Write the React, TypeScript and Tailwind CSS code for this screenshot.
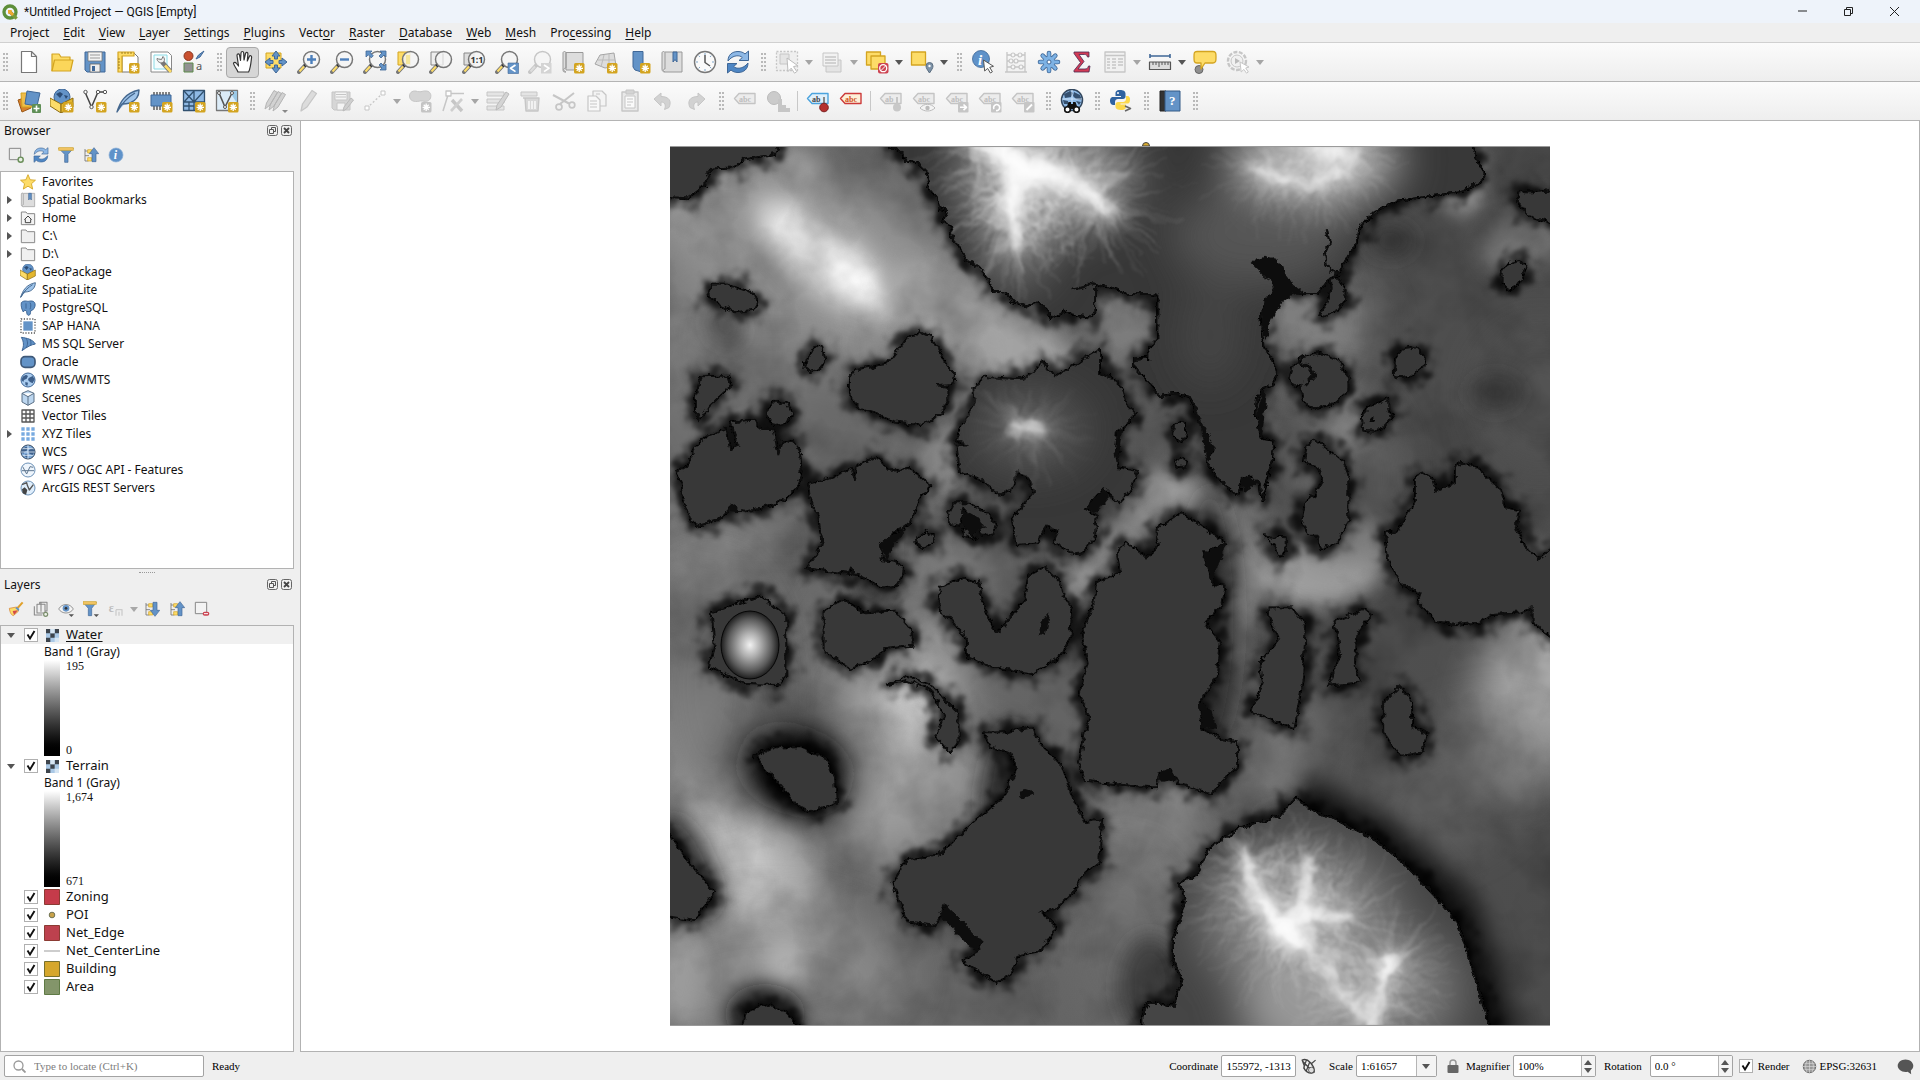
import React, { type ReactNode } from "react";

const BLUE = "#6393c7";
const NAVY = "#3f6797";
const YEL = "#fddc68";
const GOLD = "#d3a420";

/* ---------- icon helpers ---------- */

function Svg({ s = 24, vb = 24, children }: { s?: number; vb?: number; children: ReactNode }) {
  return (
    <svg width={s} height={s} viewBox={`0 0 ${vb} ${vb}`} fill="none" strokeLinejoin="round" aria-hidden="true">
      {children}
    </svg>
  );
}

function Star({ c = GOLD }: { c?: string }) {
  return (
    <g>
      <rect x="13" y="13" width="10.5" height="10.5" rx="1.5" fill={c} />
      <path d="M18.2 14.6v7.4M14.6 18.3h7.4M15.7 15.8l5 5M20.7 15.8l-5 5" stroke="#fff" strokeWidth="1.3" />
    </g>
  );
}

function Lens({ c = "#777", handle = YEL, children }: { c?: string; handle?: string; children?: ReactNode }) {
  return (
    <g>
      <path d="M2 22l6-6.500" stroke={c} strokeWidth="4" strokeLinecap="round" />
      <path d="M2.500 21.500l4.500-5" stroke={handle} strokeWidth="2" />
      <path d="M7.500 16l2-2" stroke={handle === YEL ? "#222" : c} strokeWidth="3" />
      <circle cx="14.500" cy="9.500" r="8" fill="#f4f4f4" fillOpacity="0.85" stroke={c} strokeWidth="1.500" />
      {children}
    </g>
  );
}

function Tag({ c = "#c4c4c4", f = "#ececec", t = "#bdbdbd", text = "abc" }: { c?: string; f?: string; t?: string; text?: string }) {
  return (
    <g>
      <path d="M1.500 9.500L6 4.500h16v10H6z" fill={f} stroke={c} strokeWidth="1.400" />
      <text x="6" y="12.500" fontSize="8" fontWeight="700" fontFamily="Liberation Serif, serif" fill={t}>{text}</text>
    </g>
  );
}

function Globe({ dark = false }: { dark?: boolean }) {
  return (
    <g>
      <circle cx="12" cy="12" r="10.500" fill={dark ? "#7ea9d8" : "#a9cbee"} stroke={dark ? "#33475e" : NAVY} strokeWidth="1.500" />
      <path d="M4 7l5-3 3 2-2 4-4 2-1 3-3-3zM13 9l6-3 3 5-3 6-4-2-3-3zM8 15l4 1-1 5-3-2z" fill="#3d5f8a" />
    </g>
  );
}

const G = "#c6c6c6";
const GF = "#e4e4e4";

const icons: Record<string, ReactNode> = {
  newFile: <path d="M4.500 1.500h10l5 5v16h-15zM14.500 1.500v5h5" fill="#fff" stroke="#777" strokeWidth="1.200" />,
  open: (
    <>
      <path d="M2 21V4h7l2 3h9v5" fill={YEL} stroke={GOLD} strokeWidth="1.200" />
      <path d="M2 21L4.500 10H23l-2.500 11z" fill="#fbd65a" stroke={GOLD} strokeWidth="1.200" />
    </>
  ),
  save: (
    <>
      <path d="M2 2h20v20H4l-2-2z" fill={BLUE} stroke={NAVY} />
      <rect x="5" y="2" width="14" height="9" fill="#f3f3f3" stroke="#777" strokeWidth=".8" />
      <path d="M7 5h10M7 8h10" stroke="#999" />
      <rect x="7" y="14" width="10" height="8" fill="#eee" stroke="#666" strokeWidth=".8" />
      <rect x="9" y="16" width="3" height="5" fill={NAVY} />
    </>
  ),
  layout: (
    <>
      <path d="M6 3h12l4 4v15H6z" fill="#fff" stroke="#777" />
      <path d="M2 2h16v4H6v16H2z" fill={YEL} stroke={GOLD} strokeWidth="1.200" />
      <path d="M6 2v2M9 2v2M12 2v2M15 2v2M2 9h2M2 12h2M2 15h2M2 18h2" stroke="#8a6a10" strokeWidth=".8" />
      <Star />
    </>
  ),
  wrench: (
    <>
      <path d="M2 2h17l3.500 3.500V22H2z" fill="#fff" stroke="#888" />
      <path d="M5 5h13v14H5z" fill="#f4fcfd" stroke="#8adbe6" />
      <path d="M21 21l-8-9" stroke="#777" strokeWidth="4.400" />
      <path d="M22 22l-6-6.500" stroke={YEL} strokeWidth="2.600" />
      <path d="M8 8.500c0 3 3 5 5.500 4s2.500-4 .5-6l-1.500 3-3-.5z" fill="#eee" stroke="#777" />
    </>
  ),
  styleMgr: (
    <>
      <circle cx="6.500" cy="6" r="4.500" fill="#c9502f" stroke="#8b3620" />
      <path d="M14 9l2.500-4L22 1l-4 6z" fill={BLUE} stroke={NAVY} />
      <rect x="2" y="13" width="9" height="9" fill="#919191" stroke="#5d8a4a" />
      <text x="14" y="20" fontSize="11" fontFamily="Noto Sans, sans-serif" fill="#555">a</text>
    </>
  ),
  hand: (
    <path
      d="M7 22c-1-3-4-6-4.500-8.500 0-1.500 2-1.500 3 0L7.500 16 6 5.500C6 3.500 8 3.500 8.500 5l1 5.500L10 3c.2-2 2.500-2 2.700 0l.3 7 1.500-6.500c.5-1.700 2.500-1.300 2.400.5L16.300 11l2-4.500c.7-1.500 2.500-.9 2.300.8-.6 5-1 11-3 14.700z"
      fill="#fff" stroke="#333" strokeWidth="1.200"
    />
  ),
  panSel: (
    <>
      <rect x="2" y="3" width="15" height="15" fill={YEL} stroke={GOLD} />
      <path d="M12 1l4 5h-2.500v3h-3V6H8zM12 23l4-5h-2.500v-3h-3v3H8zM1 12l5-4v2.500h3v3H6V16zM23 12l-5-4v2.500h-3v3h3V16z" fill={BLUE} stroke={NAVY} />
    </>
  ),
  zin: <Lens><path d="M14.500 5v9M10 9.500h9" stroke="#4c7fbb" strokeWidth="2.400" /></Lens>,
  zout: <Lens><path d="M10 9.500h9" stroke="#4c7fbb" strokeWidth="2.400" /></Lens>,
  zfull: (
    <>
      <Lens />
      <path d="M3 1h6L7.300 2.800l3 3-2 2-3-3L3 7zM23 1v6l-2-2-3 3-2-2 3-3-2-2zM23 20v-6l-2 2-3-3-2 2 3 3-2 2z" fill={BLUE} stroke={NAVY} strokeWidth=".8" />
    </>
  ),
  zsel: (<><rect x="2" y="2" width="12" height="13" fill={YEL} stroke={GOLD} /><Lens><path d="M10 5h4v9h-4z" fill="#f5e69a" /></Lens></>),
  zlayer: (<><rect x="2" y="2" width="12" height="13" fill="#eee" stroke="#888" /><Lens><path d="M14 4v11" stroke="#ddd" /></Lens></>),
  z11: (<><rect x="2" y="3" width="10" height="12" fill="#ddd" stroke="#888" /><Lens><text x="8.500" y="13" fontSize="9" fontWeight="700" fontFamily="Noto Sans, sans-serif" fill="#333">1:1</text></Lens></>),
  zlast: (<><Lens /><rect x="13" y="13" width="10.500" height="10.500" fill={BLUE} stroke={NAVY} strokeWidth=".6" /><path d="M20.500 15l-5 3.300 5 3.300" stroke="#fff" strokeWidth="1.700" /></>),
  znext: (<><Lens c={G} handle="#ddd" /><rect x="13" y="13" width="10.500" height="10.500" fill="#d4d4d4" /><path d="M16 15l5 3.300-5 3.300" stroke="#fff" strokeWidth="1.700" /></>),
  newMap: (<><path d="M2 3c0-2 3-2 3 0v15c-3 0-3 3 0 4h-1c-2 0-2-1-2-3zM5 2.500h17V20H5z" fill="#ddd" stroke="#999" /><Star /></>),
  new3d: (<><path d="M6 5l14-2 2 13-11 2-10-4z" fill="#ddd" stroke="#a5a5a5" /><path d="M4 10l17 0M10 5l-3 12M15 4l0 13" stroke="#bbb" /><Star /></>),
  bmNew: (<><path d="M6 1.500h10v17l-3 3-5-1.500-2-3z" fill={BLUE} stroke={NAVY} /><Star /></>),
  bm: (<><path d="M2 3c0-2 3-2 3 0v16c-2 0-2 2 0 3M5 2h17v20H5c-2 0-3-1-3-3V3" fill="#ddd" stroke="#999" /><path d="M13 2h4v10l-2-2.500-2 2.500z" fill={BLUE} stroke={NAVY} /></>),
  clock: (<><circle cx="12" cy="12" r="10.500" fill="#fafafa" stroke="#777" strokeWidth="1.400" /><path d="M12 3v2M12 19v2M3 12h2M19 12h2M5.600 5.600l1.300 1.300M17 17l1.300 1.300M18.300 5.600L17 7M7 17l-1.400 1.400" stroke="#7fa5c9" /><path d="M12 5v7.500l5 3.500" stroke="#555" strokeWidth="1.500" /></>),
  refresh: (
    <>
      <path d="M2 11C2 5 6 1.500 12 1.500c3 0 5.500 1 7 2.500L22.500 1v9.500H13l3.300-3C14 5 7 4.500 2 11z" fill="#8db8e6" stroke={NAVY} />
      <path d="M22 13c0 6-4 9.500-10 9.500-3 0-5.500-1-7-2.500L1.500 23v-9.500H11l-3.300 3C10 19 17 19.500 22 13z" fill="#4e86c4" stroke={NAVY} />
    </>
  ),
  selRect: (<><rect x="1.500" y="1.500" width="21" height="19" fill="#efefef" stroke={G} strokeDasharray="2 1.500" strokeWidth="1.300" /><path d="M5 4h9v10H5z" fill={GF} stroke={G} /><path d="M12 8l1 13.500 3.200-3.300 3.300 5 2.300-1.600-3.300-5 4.200-1z" fill="#fff" stroke="#bbb" /></>),
  selForm: (<><rect x="6" y="10" width="15" height="12" fill={GF} stroke={G} /><rect x="3" y="3" width="15" height="13" fill="#f2f2f2" stroke={G} /><path d="M5 7h11M5 10h11M5 13h11" stroke={G} strokeWidth="1.300" /></>),
  desel: (<><rect x="1.500" y="2" width="14" height="13" fill={YEL} stroke={GOLD} strokeWidth="1.300" /><rect x="6" y="6" width="14" height="13" fill={YEL} stroke={GOLD} strokeWidth="1.300" /><rect x="13" y="13" width="10.500" height="10.500" rx="2" fill="#cd4452" /><circle cx="18.200" cy="18.200" r="3.500" stroke="#fff" strokeWidth="1.300" /><path d="M15.500 21l5.500-5.500" stroke="#fff" /></>),
  selLoc: (<><rect x="1.500" y="2" width="14" height="13" fill={YEL} stroke={GOLD} strokeWidth="1.300" /><path d="M19.500 23c-2-3-3.500-5-3.500-7a3.500 3.500 0 017 0c0 2-1.500 4-3.500 7z" fill="#7d93a8" stroke="#5c6e80" /><circle cx="19.500" cy="16" r="1.200" fill="#fff" /></>),
  identify: (<><circle cx="10" cy="9" r="8.500" fill="#5f92c9" stroke={NAVY} strokeWidth=".8" /><text x="7" y="15" fontSize="15" fontStyle="italic" fontWeight="700" fontFamily="Liberation Serif, serif" fill="#fff">i</text><path d="M12.500 10l1.200 11 2.900-2.600 2.800 4.600 2-1.200-2.700-4.500 3.800-1z" fill="#fff" stroke="#555" /></>),
  abacus: (<><path d="M3 2v20M21 2v20M1 22h22M3 5h18M3 11h18M3 17h18" stroke={G} strokeWidth="1.300" /><g fill="#f6f6f6" stroke={G} strokeWidth="1.200"><circle cx="9" cy="5" r="2" /><circle cx="16" cy="5" r="2" /><circle cx="7" cy="11" r="2" /><circle cx="12" cy="11" r="2" /><circle cx="9" cy="17" r="2" /><circle cx="17" cy="17" r="2" /></g></>),
  gear: (<><g stroke={NAVY} strokeWidth="4.600" strokeLinecap="round"><path d="M12 3v18M3 12h18M5.700 5.700l12.600 12.600M18.300 5.700L5.700 18.300" /></g><g stroke="#7db2e4" strokeWidth="3" strokeLinecap="round"><path d="M12 3v18M3 12h18M5.700 5.700l12.600 12.600M18.300 5.700L5.700 18.300" /></g><circle cx="12" cy="12" r="5.500" fill="#7db2e4" /><circle cx="12" cy="12" r="2" fill="#fff" stroke={NAVY} /></>),
  sigma: <path d="M4 2h15v5h-1.500c-.5-2-1.500-2.500-3-2.500H9l5 7-6 7.500h7c2 0 3-1 3.500-3H20l-1 6H4v-1.500l6.500-8L4 3.500z" fill="#d23a55" stroke="#4a2b52" strokeWidth=".8" />,
  table: (<><rect x="2" y="2" width="20" height="20" fill="#f1f1f1" stroke={G} strokeWidth="1.300" /><path d="M2 5.500h20M4 9h3M9 9h4M15 9h5M4 12h3M9 12h4M15 12h5M4 15h3M9 15h4M15 15h5M4 18h3M9 18h4" stroke={G} strokeWidth="1.300" /></>),
  measure: (<><path d="M2 6h20M2 4v4M22 4v4" stroke="#3f6797" strokeWidth="1.600" /><rect x="1.500" y="12" width="21" height="7.500" fill="#ddd" stroke="#555" strokeWidth="1.200" /><path d="M5 12v3M8 12v3M11 12v5M14 12v3M17 12v3M20 12v3" stroke="#555" /></>),
  tip: (<><circle cx="6" cy="19.500" r="4" fill="#8f8f8f" stroke="#666" /><path d="M4 1.500h16c3 0 3 2 3 5.500s0 6-3 6h-8l-4 6 0-6H4c-3 0-3-2-3-6s0-5.500 3-5.500z" fill={YEL} stroke={GOLD} strokeWidth="1.300" /></>),
  action: (<><circle cx="11" cy="11" r="9" stroke={G} strokeWidth="2.400" strokeDasharray="4 1.500" /><circle cx="11" cy="11" r="6" fill="#f1f1f1" stroke={G} /><path d="M9 8l5 3-5 3z" fill="#bbb" /><path d="M14 12l1.200 10 2.700-2.600 2.600 3.800 1.800-1.200-2.600-4 3.300-1z" fill="#fff" stroke={G} /></>),
  dsm: (<><path d="M1 11l9-3 4 11-9 4z" fill="#d9822b" stroke="#9a5717" /><path d="M4 4h11v14H5z" fill="#f0bd4a" stroke={GOLD} /><path d="M10 2l13 2-3 13-12-2z" fill={BLUE} stroke={NAVY} /><rect x="15" y="15" width="9" height="9" rx="1" fill="#5f8f56" /><path d="M19.500 16.500v6M16.500 19.500h6" stroke="#fff" strokeWidth="1.600" /></>),
  gpkg: (<><circle cx="12" cy="8" r="8" fill={BLUE} stroke={NAVY} /><path d="M6 5l4-2 3 2-3 4zM14 6l4 1-2 3z" fill="#2c4c74" /><path d="M0 9l11 6v9L0 17z" fill={YEL} stroke="#8a6a10" /><path d="M23 9l-12 6v9l12-6z" fill="#e3b62e" stroke="#8a6a10" /></>),
  shp: (<><path d="M2 3l6.500 15L15 3h7" stroke="#444" strokeWidth="1.500" /><g fill="#fff" stroke="#555"><circle cx="2.500" cy="3" r="1.700" /><circle cx="8.500" cy="18" r="1.700" /><circle cx="15" cy="3" r="1.700" /><circle cx="22" cy="3" r="1.700" /></g><Star /></>),
  feather: (<path d="M1 23C4 13 9 4 23 1c0 7-4 11-9 13-4 1-6 1-8 1z M1 23C6 14 12 8 19 4" fill="#9fc4ea" stroke="#44678e" strokeWidth="1.400" />),
  chip: (<><path d="M5 3v18M8 3v18M11 3v18M14 3v18M17 3v18M20 3v18" stroke="#444" strokeWidth="1.300" /><rect x="2" y="6" width="20" height="11" fill={BLUE} stroke={NAVY} /><Star /></>),
  mesh: (<><rect x="1.500" y="1.500" width="21" height="20" fill="#8fb9e4" stroke="#32516f" strokeWidth="1.300" /><path d="M12 1.500v20M1.500 13h21M2 2l10 11M12 2l-10 11M12 13L22 2M2 17h10M7 13v8" stroke="#32516f" strokeWidth="1.300" /><Star /></>),
  vlayer: (<><rect x="1.500" y="1.500" width="21" height="20" fill="#dcecf8" stroke="#777" strokeWidth="1.300" /><path d="M14 2h8v12z" fill="#9cc9e6" /><path d="M4 4l6 14L17 4" stroke="#555" strokeWidth="1.600" /><circle cx="4" cy="4" r="1.500" fill="#fff" stroke="#555" /><circle cx="10" cy="18" r="1.500" fill="#fff" stroke="#555" /><circle cx="17" cy="4" r="1.500" fill="#fff" stroke="#555" /><Star /></>),
  pencils: (<><path d="M1 20l1.500-6L10 1.500l3.500 2L6 16zM5 21l1.500-6L14 2.500l3.500 2L10 17zM9 22l1.500-6L18 3.500l3.500 2L14 18z" fill="#d2d2d2" stroke="#b4b4b4" /><path d="M18 21h6l-3 3z" fill="#888" /></>),
  pencil: (<path d="M4 22l1.500-7L15 1.500l4.500 3L10 18z" fill="#dcdcdc" stroke={G} strokeWidth="1.300" />),
  saveEd: (<><path d="M2 3h18v18H4l-2-2z" fill="#d6d6d6" stroke={G} /><path d="M5 3h12v8H5zM7 14h8v7H7z" fill="#f4f4f4" stroke={G} /><path d="M6 5.500h10M6 8h10" stroke={G} /><path d="M13 22l1-4 7-9 2.500 2-7 9z" fill="#cfcfcf" stroke="#bbb" /></>),
  digit: (<><path d="M4 19L20 4" stroke={G} strokeWidth="1.300" strokeDasharray="2 2" /><rect x="2" y="17" width="4" height="4" fill="#fff" stroke={G} /><rect x="18" y="2" width="4" height="4" fill="#fff" stroke={G} /></>),
  blob: (<><path d="M1.500 7c0-4 4-6 8-4.500 4 1 5-1 9-.5s5 4 4 7-4 4-8 3c-3-.5-4 .8-7 .5-4-.3-6-2.500-6-5.500z" fill="#d4d4d4" stroke={G} /><Star c="#c4c4c4" /></>),
  vertex: (<><path d="M2 22L7 6M9 4.500h14" stroke={G} strokeWidth="1.500" /><rect x="5" y="2" width="5" height="5" fill="#fff" stroke={G} strokeWidth="1.300" /><path d="M11 11l10 11" stroke={G} strokeWidth="3.400" /><path d="M21 10L10 22" stroke="#cfcfcf" strokeWidth="2.600" /></>),
  multi: (<><path d="M1 3h17v4H1zM1 10h17v4H1zM1 17h17v4H1z" fill={GF} stroke={G} /><path d="M10 21l1-5L20 3l3 2-8 13z" fill="#d4d4d4" stroke="#bbb" /></>),
  trash: (<><path d="M2 3h16v4H2z" fill={GF} stroke={G} /><path d="M4 9h16M6 9h14l-1 13H7z" fill="#d8d8d8" stroke={G} strokeWidth="1.400" /><path d="M10 12v8M13 12v8M16 12v8" stroke="#fff" strokeWidth="1.300" /></>),
  cut: (<><path d="M1 6l16 8.500M22 4L8 15" stroke={G} strokeWidth="2" /><circle cx="20" cy="16" r="2.800" stroke={G} strokeWidth="1.700" /><ellipse cx="7" cy="18" rx="3" ry="2.800" stroke={G} strokeWidth="1.700" /></>),
  copy: (<><path d="M8 2h9l4 4v11H8z" fill="#f4f4f4" stroke={G} strokeWidth="1.200" /><path d="M3 7h8l4 4v11H3z" fill="#f8f8f8" stroke={G} strokeWidth="1.200" /><path d="M5 12h7M5 15h7M5 18h7M11 5h4" stroke={G} /></>),
  paste: (<><rect x="4" y="3" width="16" height="19" fill="#e9e9e9" stroke={G} strokeWidth="1.400" /><path d="M7 7h10v12H7z" fill="#fafafa" stroke={G} /><path d="M8 1h8v4H8z" fill="#d4d4d4" stroke={G} /><path d="M9 10h6M9 13h6M9 16h4" stroke={G} /></>),
  undo: <path d="M3 10l7-6v3.500c8 0 11 4.500 8 11l-4.500 2c2-5 0-7.500-3.500-7.500v4z" fill="#d2d2d2" stroke={G} />,
  redo: <path d="M21 10l-7-6v3.500c-8 0-11 4.500-8 11l4.500 2c-2-5 0-7.500 3.500-7.500v4z" fill="#d2d2d2" stroke={G} />,
  tag: <Tag />,
  diagram: (<><circle cx="8" cy="9" r="6.500" fill="#cbcbcb" stroke="#bbb" /><path d="M12 10h4v13h-4zM16 16h4v7h-4zM20 19h4v4h-4z" fill={G} /></>),
  tagPin: (<><Tag c="#4ba3dd" f="#dff0fb" t="#444" text="ab" /><path d="M18 8v7" stroke="#888" strokeWidth="2" /><circle cx="18" cy="18.500" r="4.300" fill="#b5302f" stroke="#7c1f1f" /></>),
  tagRed: <Tag c="#cc3a3a" f="#fdf0d8" t="#d0521f" />,
  tagPin2: (<><Tag text="ab" /><path d="M18 8v7" stroke={G} strokeWidth="2" /><circle cx="18" cy="18.500" r="4" fill="#c8c8c8" /></>),
  tagEye: (<><Tag /><path d="M8 19c4-5 11-5 15 0-4 4-11 4-15 0z" fill="#f4f4f4" stroke="#bbb" /><circle cx="15.500" cy="19" r="2.200" fill="#bbb" /></>),
  tagMove: (<><Tag /><rect x="13" y="13" width="10.500" height="10.500" rx="1" fill={G} /><path d="M15 18.300h6M18.500 15.500l3 2.800-3 2.800" stroke="#fff" strokeWidth="1.600" /></>),
  tagRot: (<><Tag /><rect x="13" y="13" width="10.500" height="10.500" rx="1" fill={G} /><path d="M16 20a3 3 0 112 1.500" stroke="#fff" strokeWidth="1.600" /></>),
  tagEdit: (<><Tag /><rect x="13" y="13" width="10.500" height="10.500" rx="1" fill={G} /><path d="M15.500 21l5.500-5.500" stroke="#fff" strokeWidth="1.800" /></>),
  search: (
    <>
      <circle cx="12" cy="11" r="10.500" fill="#8fbbe8" stroke="#33475e" strokeWidth="1.500" />
      <path d="M4 5l6-3 3 2-2 4-6 1zM14 3l6 3 2 5-6-1-3-3zM3 11l5 1v3H4zM16 12l5 1-2 3z" fill="#35506f" />
      <path d="M2 10h20M12 1v12" stroke="#dcebfa" strokeWidth=".8" />
      <path d="M6 20l2.500-7H11v2h2v-2h2.500L18 20z" fill="#111" />
      <circle cx="7.500" cy="20.500" r="2.800" fill="#fff" stroke="#111" strokeWidth="1.600" />
      <circle cx="16.500" cy="20.500" r="2.800" fill="#fff" stroke="#111" strokeWidth="1.600" />
    </>
  ),
  python: (<><path d="M11 1C7 1 6.500 3 6.500 4.500V7H12v1H4C1.500 8 1 10.500 1 12s.8 4 3 4h2v-3c0-2 1.500-3 3-3h5c1.500 0 2.500-1 2.500-2.500v-3C16.500 2 14 1 11 1z" fill="#2f62a0" /><path d="M12 21c4 0 5-1.500 5-3v-2.500h-5.500v-1H19c2 0 2-3.500 2-4.500s-.6-3-2.500-3H17v3c0 2-1.500 3-3 3H9c-1.500 0-2.500 1-2.500 2.500v2.500C6.500 20 9 21 12 21z" fill="#fbd84c" /><circle cx="9" cy="4" r="1" fill="#fff" /><path d="M16 17l5.500 2.500L16 22" stroke="#666" strokeWidth="1.600" /></>),
  help: (<><path d="M2 2h6v20H2z" fill="#333" stroke="#222" /><path d="M7 2h15v20H7z" fill={BLUE} stroke="#345a86" /><text x="11" y="16" fontSize="13" fontWeight="700" fontFamily="Liberation Serif, serif" fill="#fff">?</text></>),
  globe: <Globe />,
  globeDark: (<><Globe dark /><path d="M2 12h20M12 2v20M4 7h16M4 17h16" stroke="#e4effa" strokeWidth="1.200" /></>),
  fav: <path d="M12 1l3.200 7.600 8 .7-6 5.300 1.800 8L12 18.300 5 22.600l1.800-8-6-5.300 8-.7z" fill={YEL} stroke={GOLD} strokeWidth="1.300" />,
  home: (<><path d="M2 22V3h7l2 2.500h11V22z" fill="#f3f3f3" stroke="#888" strokeWidth="1.500" /><path d="M6.500 14.500L12 9l5.500 5.500M8 14v5h8v-5" stroke="#444" strokeWidth="1.500" /></>),
  folder: <path d="M2 22V3h7l2 2.500h11V22z" fill="#f0f0f0" stroke="#8a8a8a" strokeWidth="1.500" />,
  pg: (<path d="M2 4c4-4 8-2 10-2s7-2 10 2c2 5-1 9-3 11l-3 1c0 4-1 7-3 7s-3-2-3-6l-3-2-2 3C3 15 1 9 2 4zM9 5v8M15 4c2 3 1 7 0 10" fill={BLUE} stroke={NAVY} strokeWidth="1.500" />),
  hana: (<><rect x="1.500" y="1.500" width="21" height="21" stroke="#555" strokeWidth="2" strokeDasharray="1.800 2.400" /><rect x="5" y="5" width="14" height="14" fill={BLUE} /></>),
  mssql: <path d="M2 2c8 1 17 3 21 10-6 1-12 4-20 10 3-7 3-13-1-20zM9 3c3 5 3 10 0 15M15 5c2 4 2 7 0 10" fill={BLUE} stroke={NAVY} strokeWidth="1.500" />,
  oracle: <rect x="1.500" y="4" width="21" height="16" rx="6" fill={BLUE} stroke="#3e5878" strokeWidth="2.500" />,
  scenes: <path d="M12 1l9 4v13l-9 5-9-5V5zM3 5l9 5 9-5M12 10v13" fill="#bcd6ef" stroke="#5b7086" strokeWidth="1.500" />,
  grid: <path d="M3 3h18v18H3zM9 3v18M15 3v18M3 9h18M3 15h18" fill="#fafafa" stroke="#555" strokeWidth="2" />,
  xyz: (<g fill="#78aae0"><path d="M2 2h5v5H2zM9.500 2h5v5h-5zM17 2h5v5h-5zM2 9.500h5v5H2zM9.500 9.500h5v5h-5zM17 9.500h5v5h-5zM2 17h5v5H2zM9.500 17h5v5h-5zM17 17h5v5h-5z" /></g>),
  wfs: (<><circle cx="12" cy="12" r="10.500" fill="#eef5fc" stroke="#6d92b8" strokeWidth="1.500" /><path d="M4 7l6 11 5-11 5 1M3 13h18" stroke="#5f7790" strokeWidth="1.500" /></>),
  arcgis: (<><circle cx="12" cy="12" r="10.500" fill="#dfeefc" stroke="#6d92b8" strokeWidth="1.500" /><path d="M3 7l7-3 1 4 3 7 6-8" stroke="#555" strokeWidth="2" /><path d="M3 14l4-3 4 4-2 7-5-2z" fill="#444" /></>),
  raster: (<><rect width="24" height="24" fill="#a9c8e6" /><path d="M0 0h8v8H0zM16 0h8v8h-8zM8 8h8v8H8zM0 16h8v8H0z" fill="#3d444c" /><path d="M8 0h8v8H8zM16 16h8v8h-8z" fill="#d7e6f3" /></>),
  addLayer: (<><path d="M2 2h17v17H2z" fill="#eee" stroke="#888" strokeWidth="1.500" /><circle cx="19" cy="19" r="3.800" fill="#e8f0e4" stroke="#6b8f5a" strokeWidth="2.200" /></>),
  funnel: (<><path d="M1 2h22l-8 9v12H10V11z" fill={BLUE} stroke={NAVY} /><path d="M1 1h22v4H1z" fill="#f4c76a" stroke={GOLD} /></>),
  funnelMenu: (<><path d="M0 2h20l-7 9v11H8V11z" fill={BLUE} stroke={NAVY} /><path d="M0 1h20v4H0z" fill="#f4c76a" stroke={GOLD} /><path d="M16 20h8l-4 4z" fill="#555" /></>),
  collapse: (<><path d="M3 3v18h5M3 6h6M3 13h6" stroke="#777" strokeWidth="1.300" /><path d="M7 4h6v5H7zM7 16h6v5H7z" fill={YEL} stroke={GOLD} /><path d="M16.500 1l7 9h-4v12h-6V10h-4z" fill={BLUE} stroke={NAVY} /></>),
  expand: (<><path d="M3 3v18h5M3 6h6M3 13h6" stroke="#777" strokeWidth="1.300" /><path d="M7 4h6v5H7zM7 16h6v5H7z" fill={YEL} stroke={GOLD} /><path d="M16.500 23l7-9h-4V2h-6v12h-4z" fill={BLUE} stroke={NAVY} /></>),
  info: (<><circle cx="12" cy="12" r="10.500" fill="#5f92c9" stroke="#8aaed6" /><text x="8.500" y="18.500" fontSize="18" fontStyle="italic" fontWeight="700" fontFamily="Liberation Serif, serif" fill="#fff">i</text></>),
  brush: (<><path d="M13 12l9-10" stroke="#e0a02a" strokeWidth="3" /><path d="M2 11l11-2 3 6-8 7c-3-1-5-4-6-11z" fill={YEL} stroke="#d37a2a" /><path d="M7 15l8-1-6 7z" fill="#d34a4a" /><path d="M13 9l4 3-1 3-5-4z" fill={BLUE} /></>),
  group: (<><path d="M2 8v13h12M6 5v13h12V5zM10 5V2h11v13h-3M12 1v15" stroke="#888" strokeWidth="1.600" /><circle cx="19" cy="20" r="3" fill="#eef3ea" stroke="#7c8f6e" strokeWidth="1.800" /></>),
  eye: (<><path d="M1 12c5-9 17-9 22 0-5 8-17 8-22 0z" fill="#f4f4f4" stroke="#888" strokeWidth="1.300" /><circle cx="12" cy="11" r="5" fill={BLUE} /><circle cx="12" cy="11" r="2" fill="#333" /><path d="M16 20h8l-4 4z" fill="#555" /></>),
  eps: (<><text x="1" y="16" fontSize="18" fontWeight="700" fontFamily="Liberation Serif, serif" fill="#bdbdbd">ε</text><path d="M12 13h9v9M12 13v9M16.500 16v6" stroke="#ccc" strokeWidth="2" /></>),
  remove: (<><path d="M2 2h17v17H2z" fill="#f3f3f3" stroke="#888" strokeWidth="1.500" /><rect x="13" y="16" width="10" height="6" rx="3" fill="#cd4452" /><path d="M15 19h6" stroke="#fff" strokeWidth="1.500" /></>),
};

/* ---------- toolbars ---------- */

type Tool = [icon: string, label: string, opts?: string] | "grip" | "sep";

const row1: Tool[] = [
  ["newFile", "New Project"], ["open", "Open Project"], ["save", "Save Project"], ["layout", "New Print Layout"], ["wrench", "Layout Manager"], ["styleMgr", "Style Manager"],
  "grip",
  ["hand", "Pan Map", "on"], ["panSel", "Pan to Selection"], ["zin", "Zoom In"], ["zout", "Zoom Out"], ["zfull", "Zoom Full"], ["zsel", "Zoom to Selection"], ["zlayer", "Zoom to Layer"], ["z11", "Zoom to Native Resolution"], ["zlast", "Zoom Last"], ["znext", "Zoom Next"], ["newMap", "New Map View"], ["new3d", "New 3D Map View"], ["bmNew", "New Spatial Bookmark"], ["bm", "Show Spatial Bookmarks"], ["clock", "Temporal Controller"], ["refresh", "Refresh"],
  "grip",
  ["selRect", "Select Features", "menu off"], ["selForm", "Select by Value", "menu off"], ["desel", "Deselect Features", "menu"], ["selLoc", "Select by Location", "menu"],
  "grip",
  ["identify", "Identify Features"], ["abacus", "Field Calculator"], ["gear", "Processing Toolbox"], ["sigma", "Statistical Summary"], ["table", "Attribute Table", "menu off"], ["measure", "Measure Line", "menu"], ["tip", "Map Tips"], ["action", "Run Feature Action", "menu off"],
];

const row2: Tool[] = [
  ["dsm", "Data Source Manager"], ["gpkg", "New GeoPackage Layer", "star"], ["shp", "New Shapefile Layer"], ["feather", "New SpatiaLite Layer", "star"], ["chip", "New Temporary Layer"], ["mesh", "New Mesh Layer"], ["vlayer", "New Virtual Layer"],
  "grip",
  ["pencils", "Current Edits"], ["pencil", "Toggle Editing"], ["saveEd", "Save Layer Edits"], ["digit", "Digitize", "menu off"], ["blob", "Add Record"], ["vertex", "Vertex Tool", "menu off"], ["multi", "Modify Attributes"], ["trash", "Delete Selected"], ["cut", "Cut Features"], ["copy", "Copy Features"], ["paste", "Paste Features"], ["undo", "Undo"], ["redo", "Redo"],
  "grip",
  ["tag", "Label Options"], ["diagram", "Diagram Options"], "sep", ["tagPin", "Highlight Pinned Labels"], ["tagRed", "Toggle Unplaced Labels"], "sep",
  ["tagPin2", "Pin Labels"], ["tagEye", "Show Labels"], ["tagMove", "Move Label"], ["tagRot", "Rotate Label"], ["tagEdit", "Change Label"],
  "grip", ["search", "MetaSearch"], "grip", ["python", "Python Console"], "grip", ["help", "Help Contents"], "grip",
];

function Grip() {
  return (
    <div className="flex w-4 shrink-0 justify-center gap-px pl-0.5">
      <span className="h-[18px] border-l-2 border-dotted border-[#b9b9b9]" />
      <span className="h-[18px] border-l-2 border-dotted border-[#b9b9b9]" />
    </div>
  );
}

function Down({ c = "#555" }: { c?: string }) {
  return (
    <svg width="8" height="5" viewBox="0 0 8 5" aria-hidden="true"><path d="M0 0h8L4 5z" fill={c} /></svg>
  );
}

function Toolbar({ items, label }: { items: Tool[]; label: string }) {
  return (
    <div role="toolbar" aria-label={label} className="flex h-[39px] items-center border-b border-[#b4b4b4] bg-linear-to-b from-[#fbfbfb] to-[#eeeeee]">
      <div className="-ml-1 flex"><Grip /></div>
      {items.map((t, i) => {
        if (t === "grip") return <Grip key={i} />;
        if (t === "sep") return <span key={i} className="mx-[3px] h-5 w-px bg-[#c8c8c8]" />;
        const o = t[2] ?? "";
        return (
          <div key={i} className="flex items-center">
            <button
              type="button"
              aria-label={t[1]}
              className={o === "on"
                ? "flex h-[31px] w-[33px] items-center justify-center rounded-sm border border-[#a9a9a9] bg-[#d6d6d6]"
                : "flex h-[31px] w-[33px] items-center justify-center"}
            >
              <Svg>{icons[t[0]]}{o === "star" && <Star />}</Svg>
            </button>
            {o.includes("menu") && (
              <button type="button" aria-label={`${t[1]} options`} className="flex h-[31px] w-3 items-center justify-center">
                <Down c={o.includes("off") ? "#a5a5a5" : "#555"} />
              </button>
            )}
          </div>
        );
      })}
    </div>
  );
}

/* ---------- docks ---------- */

function DockTitle({ title }: { title: string }) {
  return (
    <div className="flex h-[19px] items-center justify-between pr-0.5 pl-1">
      <h2 className="text-xs">{title}</h2>
      <div className="flex gap-[3px]">
        <button type="button" aria-label={`Float ${title}`}>
          <Svg s={11} vb={11}><rect x=".5" y=".5" width="10" height="10" rx="2" stroke="#666" /><rect x="4.500" y="2.500" width="4" height="4" stroke="#555" /><rect x="2.500" y="4.500" width="4" height="4" fill="#efefef" stroke="#555" /></Svg>
        </button>
        <button type="button" aria-label={`Close ${title}`}>
          <Svg s={11} vb={11}><rect x=".5" y=".5" width="10" height="10" rx="2" stroke="#666" /><path d="M3 3l5 5M8 3l-5 5" stroke="#444" strokeWidth="1.800" /></Svg>
        </button>
      </div>
    </div>
  );
}

const browser: [string, string, boolean?][] = [
  ["fav", "Favorites"], ["bm", "Spatial Bookmarks", true], ["home", "Home", true], ["folder", "C:\\", true], ["folder", "D:\\", true],
  ["gpkg", "GeoPackage"], ["feather", "SpatiaLite"], ["pg", "PostgreSQL"], ["hana", "SAP HANA"], ["mssql", "MS SQL Server"], ["oracle", "Oracle"],
  ["globe", "WMS/WMTS"], ["scenes", "Scenes"], ["grid", "Vector Tiles"], ["xyz", "XYZ Tiles", true], ["globeDark", "WCS"], ["wfs", "WFS / OGC API - Features"], ["arcgis", "ArcGIS REST Servers"],
];

function Check({ label }: { label: string }) {
  return (
    <span className="relative flex h-3.5 w-3.5 shrink-0">
      <input type="checkbox" defaultChecked aria-label={label} className="peer h-3.5 w-3.5 appearance-none border border-[#b0b0b0] bg-white" />
      <svg className="pointer-events-none absolute inset-0 hidden peer-checked:block" viewBox="0 0 14 14" aria-hidden="true">
        <path d="M3.500 6.500l2.500 4 4.500-7.500" fill="none" stroke="#111" strokeWidth="1.900" />
      </svg>
    </span>
  );
}

function RasterLayer({ name, max, min, active }: { name: string; max: string; min: string; active?: boolean }) {
  return (
    <li className="pb-px">
      <div className={active ? "flex h-[18px] items-center bg-[#f0f0f0] pl-1.5" : "flex h-[18px] items-center pl-1.5"}>
        <button type="button" aria-label={`Collapse ${name}`} className="mr-[9px]"><Down /></button>
        <Check label={name} />
        <span className="mr-[7px] ml-2"><Svg s={13}>{icons.raster}</Svg></span>
        <span className={active ? "text-[13px] underline underline-offset-2" : "text-[13px]"}>{name}</span>
      </div>
      <div className="pl-[43px] text-xs leading-4">Band 1 (Gray)</div>
      <div className="flex h-24 gap-[6px] pl-[43px] font-['Liberation_Serif',serif] text-xs leading-3">
        <span className="w-4 bg-linear-to-b from-white to-black" />
        <span className="flex flex-col justify-between"><span>{max}</span><span>{min}</span></span>
      </div>
    </li>
  );
}

const vectors: [string, ReactNode][] = [
  ["Zoning", <rect x=".5" y=".5" width="15" height="15" fill="#c53b4a" stroke="#8b3b33" />],
  ["POI", <circle cx="8" cy="8" r="2.800" fill="#c9a24a" stroke="#6f7355" />],
  ["Net_Edge", <rect x=".5" y=".5" width="15" height="15" fill="#bd414e" stroke="#8b3b33" />],
  ["Net_CenterLine", <path d="M0 8h16" stroke="#bdbdbd" strokeWidth="1.500" />],
  ["Building", <rect x=".5" y=".5" width="15" height="15" fill="#d5a72c" stroke="#77702c" />],
  ["Area", <rect x=".5" y=".5" width="15" height="15" fill="#83956a" stroke="#5f7a45" />],
];

function SmallTools({ items, label }: { items: [string, string][]; label: string }) {
  return (
    <div role="toolbar" aria-label={label} className="flex h-[31px] items-center gap-[9px] pb-px pl-2">
      {items.map(([k, l]) => (
        <React.Fragment key={l}>
          <button type="button" aria-label={l}><Svg s={16}>{icons[k]}</Svg></button>
          {k === "eps" && <span className="-mx-[3px]"><Down c="#a8a8a8" /></span>}
        </React.Fragment>
      ))}
    </div>
  );
}

/* ---------- raster map ---------- */

type Seg = [sheet: "a" | "b" | "c", pts: string];

const sheets = {
  a: [1 / 3, -10, 1 / 3, -7],
  b: [1 / 3, 430, 1 / 3, -7],
  c: [1 / 1.742, -10, 1 / 3, 433],
};

function trace(segs: Seg[]) {
  return segs
    .flatMap(([k, p]) => {
      const [sx, ox, sy, oy] = sheets[k];
      return p.trim().split(/\s+/).map((q) => {
        const [x, y] = q.split(",").map(Number);
        return `${(x * sx + ox).toFixed(1)},${(y * sy + oy).toFixed(1)}`;
      });
    })
    .join(" ");
}

const flats: Seg[][] = [
  [["a", "0,-30 365,-30 355,20 345,45 250,62 220,85 160,88 140,110 135,140 80,178 0,172"]],
  [["a", "660,-30 690,20 720,35 740,65 770,70 800,100 810,130 805,145 830,175 840,210 860,215 850,250 880,262 870,290 900,320 918,365 950,378 985,420 1000,455 1050,468 1060,490 1100,502 1130,490 1160,508 1170,540 1210,515 1240,530 1290,535 1305,510 1305,445"], ["b", "0,435 60,455 80,465 150,465 172,470 172,600 145,630 145,660 103,662 103,685 180,770 230,765 270,775 290,830 325,890 340,935 320,970 370,1035 415,1070 425,1020 450,1010 480,1040 485,1088 500,1030 515,970 520,905 485,900 468,840 470,780 485,748 515,740 530,710 520,670 490,620 482,540 495,490 525,450 570,440 610,465 650,465 685,420 715,405 770,310 775,270 800,240 850,205 890,185 970,175 1090,158 1140,130 1155,105 1130,65 1115,20 1110,-30"]],
  [["b", "1380,150 1300,160 1255,160 1255,190 1270,210 1290,232 1380,262"]],
  [["b", "690,420 710,415 737,450 735,480 715,515 680,530 657,527 680,490 692,450"]],
  [["b", "1205,400 1225,372 1260,366 1282,378 1265,420 1250,440 1230,452 1205,435"]],
  [["b", "575,680 610,655 660,642 700,655 720,670 745,715 745,755 700,795 650,810 620,800 605,770 605,740 580,742 567,715"]],
  [["b", "885,660 905,632 945,625 975,655 970,685 935,713 890,718 882,700"]],
  [["b", "785,825 810,800 865,780 865,815 880,825 850,865 820,878 790,875"]],
  [["b", "222,855 240,845 258,850 258,880 248,912 230,905 220,885"]],
  [["b", "225,965 245,955 262,965 255,985 230,988"]],
  [["b", "620,920 645,902 690,935 730,970 745,1010 745,1140 715,1210 680,1220 665,1235 650,1190 625,1190 605,1145 615,1090 650,1060 668,1020 650,980 612,970"]],
  [["b", "498,1192 560,1195 560,1230 540,1255 525,1220"]],
  [["b", "945,1010 965,1000 1000,1020 1010,1058 1065,1030 1065,985 1090,968 1130,985 1200,1050 1215,1105 1260,1115 1250,1160 1275,1225 1318,1260 1349,1232 1400,1240"], ["c", "1600,190 1550,170 1520,130 1520,85 1500,100 1450,105 1430,130 1385,138 1350,125 1320,70 1325,45 1295,20"], ["b", "940,1350 900,1330 865,1265 855,1180 890,1178 945,1090"]],
  [["a", "145,460 155,437 205,437 285,465 292,490 280,512 225,520 180,500 165,482 148,478"]],
  [["a", "440,660 470,618 490,625 495,655 480,690 450,698 436,685"]],
  [["a", "120,712 205,710 213,740 150,800 120,845 105,815 105,770 115,750"]],
  [["a", "320,810 345,785 385,795 397,825 380,855 340,858 320,830"]],
  [["a", "50,1000 75,985 105,930 140,890 200,870 210,930 235,920 210,850 290,845 305,870 340,870 355,945 365,905 400,910 420,940 425,1000 410,1050 370,1085 300,1110 250,1118 210,1110 170,1145 120,1160 95,1150 65,1075 62,1030"]],
  [["a", "570,715 590,690 680,675 740,600 780,577 810,590 835,630 860,680 885,705 880,735 835,738 865,745 865,790 835,830 780,858 700,850 650,825 590,805 570,760"]],
  [["a", "445,1035 500,1020 575,990 585,1025 590,980 620,965 650,955 690,995 750,990 815,1040 780,1075 750,1150 690,1190 660,1220 665,1260 710,1270 735,1300 710,1340 670,1345 600,1310 580,1305 577,1280 570,1305 440,1288 485,1220 475,1130 450,1080"]],
  [["a", "865,1120 880,1090 920,1090 985,1125 1010,1160 1000,1190 965,1190 960,1160 910,1105 900,1160 870,1155"]],
  [["a", "905,1180 925,1170 948,1200 910,1190"]],
  [["a", "765,1200 795,1175 825,1190 815,1215 790,1228 768,1215"]],
  [["a", "975,710 1000,715 1060,720 1090,720 1130,690 1145,665 1185,715 1205,700 1240,680 1270,660 1320,630 1320,705 1350,715"], ["b", "30,708 60,735 75,790 105,820 90,850 50,880 45,930 55,985 110,995 95,1050 60,1093 20,1060"], ["a", "1330,1048 1275,1110 1310,1130 1305,1190 1270,1240 1235,1243 1180,1210 1195,1180 1160,1160 1140,1190 1130,1210 1070,1215 1055,1140 1120,1060 1110,1020 1075,1000 1055,1050 1020,1070 960,1020 900,1000 890,920 925,920 890,905 905,860 945,790 940,750"]],
  [["c", "487,20"], ["a", "845,1340 905,1318 960,1335"], ["c", "555,-5 560,60 575,130 590,160 612,110 635,60 640,5"], ["a", "1105,1310 1155,1285 1200,1330"], ["c", "700,40 718,90 715,170 700,230 650,285 570,260 535,235 535,180 500,110 485,90"]],
  [["c", "90,100 175,50 220,110 220,290 205,318 150,315 85,265 95,200"]],
  [["c", "285,95 320,60 355,100 410,95 440,160 440,200 390,210 375,240 330,270 285,215"]],
  [["c", "395,320 430,290 475,320 500,370 520,400 520,490 505,520 480,470 495,410 470,330 430,305"]],
  [["c", "165,530 200,505 245,505 290,540 305,600 308,670 260,700 240,680"]],
  [["c", "-10,740 17,770 50,850 95,940 60,1025 -10,1005"]],
  [["c", "140,1380 150,1300 185,1273 220,1300 260,1380"]],
  [["c", "565,460 600,460 650,445 660,490 700,560 720,660 740,730 770,720 765,850 735,890 725,930 690,990 665,1000 690,1040 665,1115 625,1130 610,1190 585,1210 525,1145 560,1110 555,1080 497,980 480,1040 430,1030 405,910 430,840 485,830 540,740 600,650 620,570 610,520 575,505"]],
  [["b", "170,1170 240,1120 290,1150 380,1212 310,1240 335,1335"], ["c", "985,20 980,75 950,130 975,190 970,290 940,370 945,450 975,480 1005,490 1005,560 960,645 905,615 890,570 870,580 865,625 820,620 740,605 730,550 740,460 750,410 730,350 745,250 735,170 755,70 760,10"], ["b", "60,1300 50,1240 80,1212 140,1255 180,1220 170,1190"]],
  [["c", "1060,85 1100,85 1125,140 1120,300 1105,450 1030,400 1050,310 1045,250 1078,180 1062,120"]],
  [["c", "1175,130 1225,90 1240,110 1215,160 1210,260 1220,310 1165,320 1185,230"]],
  [["c", "1260,370 1290,320 1310,370 1310,445 1335,460 1330,520 1290,530 1260,460"]],
];

const mountain: Seg[] = [["c", "840,1390 840,1310 850,1270 895,1280 910,1200 895,1150 895,1080 915,960 905,910 935,890 955,810 1010,745 1080,710 1110,655 1130,690 1180,725 1245,780 1300,860 1360,970 1390,1030 1420,1200 1455,1390"]];

/* pits lying against the flats */
const pits: Seg[][] = [
  [["b", "455,375 470,358 495,350 530,362 550,382 562,410 580,438 610,460 570,470 545,490 505,560 500,610 484,560 490,500 522,445 520,430 490,410"]],
  [["b", "270,775 300,830 345,930 320,975 310,900"]],
  [["b", "335,1345 310,1240 380,1212 350,1290"]],
  [["b", "485,748 500,760 485,900 470,850"]],
  [["b", "425,1020 450,1008 478,1035 455,1045 428,1060"]],
  [["b", "50,880 65,870 55,980 45,940"]],
  [["a", "200,1115 220,1095 240,1118"]],
  [["a", "905,1110 950,1130 975,1165 930,1185 905,1150"]],
  [["a", "1275,1110 1330,1048 1350,1075 1310,1120"]],
  [["a", "660,1220 690,1190 740,1165 700,1225 680,1262"]],
  [["c", "485,1000 500,980 560,1085 555,1120 530,1090"]],
  [["c", "940,370 960,390 970,450 945,445"]],
  [["c", "872,575 890,570 900,600 870,610"]],
  [["c", "625,640 640,630 652,645 630,658"]],
  [["c", "665,130 680,100 672,170 660,165"]],
];

/* [x, y, rx, ry, rotation, grey, opacity] */
const glows: [number, number, number, number, number, string, number][] = [
  [150, 120, 210, 90, 30, "#a4a4a4", 0.75],
  [60, 200, 90, 110, 0, "#8a8a8a", 0.6],
  [155, 112, 90, 36, 40, "#cccccc", 0.85],
  [126, 88, 30, 18, 30, "#ffffff", 0.75],
  [184, 134, 34, 13, 42, "#ffffff", 1],
  [188, 138, 18, 10, 42, "#ffffff", 1],
  [160, 112, 52, 14, 45, "#ffffff", 0.7],
  [145, 40, 12, 50, -30, "#c4c4c4", 0.5],
  [310, 180, 110, 36, 28, "#a8a8a8", 0.9],
  [455, 175, 40, 60, 0, "#8c8c8c", 0.7],
  [40, 400, 60, 60, 0, "#909090", 0.7],
  [100, 290, 180, 90, 0, "#6b6b6b", 0.5],
  [290, 270, 20, 90, 15, "#9a9a9a", 0.7],
  [255, 310, 30, 20, 0, "#888888", 0.6],
  [230, 470, 50, 120, 50, "#888888", 0.6],
  [75, 690, 60, 170, -20, "#bababa", 0.95],
  [82, 730, 16, 70, -8, "#d0d0d0", 0.7],
  [230, 590, 60, 110, 15, "#b4b4b4", 0.9],
  [235, 570, 20, 36, 0, "#dcdcdc", 0.9],
  [250, 650, 100, 60, -20, "#9a9a9a", 0.7],
  [100, 830, 140, 70, 0, "#8f8f8f", 0.8],
  [115, 820, 20, 30, 0, "#b6b6b6", 0.8],
  [10, 830, 24, 50, 0, "#a0a0a0", 0.8],
  [40, 540, 60, 120, 0, "#6f6f6f", 0.8],
  [480, 680, 50, 120, 20, "#8c8c8c", 0.8],
  [450, 800, 60, 90, 0, "#6c6c6c", 0.7],
  [445, 400, 14, 80, 44, "#aaaaaa", 0.8],
  [520, 350, 70, 14, 22, "#a8a8a8", 0.9],
  [575, 400, 24, 80, 0, "#8a8a8a", 0.8],
  [565, 480, 10, 40, 0, "#aaaaaa", 0.7],
  [640, 430, 70, 30, 0, "#a8a8a8", 0.9],
  [695, 400, 24, 30, 0, "#a0a0a0", 0.7],
  [645, 185, 60, 60, 0, "#8a8a8a", 0.8],
  [620, 170, 40, 60, 0, "#808080", 0.7],
  [670, 330, 60, 90, 0, "#6c6c6c", 0.6],
  [675, 270, 24, 30, 0, "#8e8e8e", 0.7],
  [870, 540, 60, 110, 20, "#b2b2b2", 0.9],
  [860, 420, 30, 30, 0, "#8b8b8b", 0.7],
  [780, 640, 110, 60, -30, "#6a6a6a", 0.6],
  [605, 610, 40, 70, 20, "#868686", 0.7],
  [780, 10, 28, 60, -20, "#a5a5a5", 0.9],
  [860, 90, 50, 30, -30, "#848484", 0.8],
  [870, 250, 60, 70, 0, "#565656", 0.7],
  [825, 247, 26, 18, 0, "#262626", 0.5],
  [720, 95, 24, 16, 0, "#2c2c2c", 0.6],
  [125, 624, 62, 46, 20, "#0c0c0c", 0.85],
  [128, 628, 44, 39, 20, "#000000", 0.8],
  [95, 868, 40, 30, 0, "#111111", 0.8],
  [20, 720, 22, 56, -24, "#151515", 0.7],
  [55, 180, 14, 20, -35, "#333333", 0.7],
  [335, 635, 22, 60, 10, "#1a1a1a", 0.8],
  [540, 470, 30, 130, 0, "#161616", 0.6],
  [200, 395, 22, 70, 0, "#252525", 0.6],
  [650, 700, 70, 20, 30, "#222222", 0.6],
  [480, 840, 30, 50, 0, "#2d2d2d", 0.7],
];

/* mountain spines: nodes with spur length, count and spur opacity */
const spines: { pts: [number, number][]; reach: number; n: number; o: number; glow: number }[] = [
  { pts: [[300, -8], [335, 10], [355, 25], [375, 26], [410, 40], [440, 66]], reach: 100, n: 480, o: 0.05, glow: 0.14 },
  { pts: [[325, -6], [345, 16], [372, 27]], reach: 50, n: 140, o: 0.05, glow: 0.6 },
  { pts: [[350, 26], [342, 60], [346, 100]], reach: 80, n: 280, o: 0.048, glow: 0.05 },
  { pts: [[585, 20], [610, 34], [640, 38], [670, 26], [690, 8]], reach: 70, n: 260, o: 0.032, glow: 0.06 },
  { pts: [[640, 0], [658, 8], [675, 2]], reach: 80, n: 120, o: 0.035, glow: 0.3 },
  { pts: [[340, 280], [372, 284]], reach: 70, n: 200, o: 0.014, glow: 0 },
  { pts: [[575, 705], [584, 745], [612, 782], [640, 768], [680, 775]], reach: 96, n: 520, o: 0.036, glow: 0.06 },
  { pts: [[592, 757], [612, 782], [630, 795]], reach: 44, n: 120, o: 0.05, glow: 0.5 },
  { pts: [[612, 782], [640, 800], [670, 845], [700, 875]], reach: 70, n: 260, o: 0.036, glow: 0.08 },
  { pts: [[700, 880], [712, 830], [722, 815]], reach: 84, n: 240, o: 0.036, glow: 0.1 },
  { pts: [[632, 772], [640, 710]], reach: 64, n: 180, o: 0.034, glow: 0 },
];

function spurs() {
  let seed = 7;
  const rnd = () => ((seed = (seed * 16807) % 2147483647) / 2147483647);
  const out: { d: string; o: number; w: number }[] = [];
  for (const s of spines) {
    for (let i = 0; i < s.n; i++) {
      const t = rnd() * (s.pts.length - 1);
      const k = Math.min(Math.floor(t), s.pts.length - 2);
      const f = t - k;
      const x = s.pts[k][0] + (s.pts[k + 1][0] - s.pts[k][0]) * f;
      const y = s.pts[k][1] + (s.pts[k + 1][1] - s.pts[k][1]) * f;
      const a = rnd() * Math.PI * 2;
      const l = s.reach * (0.15 + rnd() * 0.85);
      const b = a + (rnd() - 0.5) * 0.4;
      const mx = x + Math.cos(a) * l * 0.5;
      const my = y + Math.sin(a) * l * 0.5;
      const ex = mx + Math.cos(b) * l * 0.5;
      const ey = my + Math.sin(b) * l * 0.5;
      const w = 2 + rnd() * 5;
      const px = -Math.sin(a) * w;
      const py = Math.cos(a) * w;
      out.push({
        d: `M${(x + px).toFixed(1)} ${(y + py).toFixed(1)}Q${mx.toFixed(1)} ${my.toFixed(1)} ${ex.toFixed(1)} ${ey.toFixed(1)}Q${mx.toFixed(1)} ${my.toFixed(1)} ${(x - px).toFixed(1)} ${(y - py).toFixed(1)}z`,
        o: s.o,
        w: 1 + rnd() * 3,
      });
    }
  }
  return out;
}

const spurLines = spurs();
const flatPts = flats.map(trace);
const pitPts = pits.map(trace);
const mountainPts = trace(mountain);
const eastSlope = trace([["c", "1110,655 1180,725 1245,780 1300,860 1360,970 1390,1030 1420,1200 1455,1390"]]);

function TerrainMap() {
  return (
    <svg viewBox="0 0 880 880" className="aspect-square h-full" role="img" aria-label="Terrain raster">
      <defs>
        <filter id="soft30" x="-80%" y="-80%" width="260%" height="260%"><feGaussianBlur stdDeviation="22" /></filter>
        <filter id="soft14" x="-100%" y="-100%" width="300%" height="300%"><feGaussianBlur stdDeviation="10" /></filter>
        <filter id="soft9" x="-60" y="-60" width="1000" height="1000" filterUnits="userSpaceOnUse"><feGaussianBlur stdDeviation="9" /></filter>
        <filter id="shade" x="-20" y="-20" width="920" height="920" filterUnits="userSpaceOnUse">
          <feTurbulence type="fractalNoise" baseFrequency="0.06" numOctaves={2} seed={4} result="n" />
          <feGaussianBlur in="SourceGraphic" stdDeviation="6" result="b" />
          <feDisplacementMap in="b" in2="n" scale="26" xChannelSelector="R" yChannelSelector="G" result="d" />
          <feGaussianBlur in="d" stdDeviation="1" />
        </filter>
        <filter id="rough" x="-20" y="-20" width="920" height="920" filterUnits="userSpaceOnUse">
          <feTurbulence type="fractalNoise" baseFrequency="0.14" numOctaves={3} seed={9} result="n" />
          <feDisplacementMap in="SourceGraphic" in2="n" scale="7" xChannelSelector="R" yChannelSelector="G" />
        </filter>
        <filter id="ridge" x="0" y="0" width="880" height="880" filterUnits="userSpaceOnUse">
          <feTurbulence type="fractalNoise" baseFrequency="0.06" numOctaves={2} seed={2} result="n" />
          <feDisplacementMap in="SourceGraphic" in2="n" scale="12" xChannelSelector="R" yChannelSelector="G" result="d" />
          <feGaussianBlur in="d" stdDeviation="1" />
        </filter>
        <filter id="grain" x="0" y="0" width="880" height="880" filterUnits="userSpaceOnUse">
          <feTurbulence type="fractalNoise" baseFrequency="0.016" numOctaves={4} seed={12} />
          <feColorMatrix values="0 0 0 0 0  0 0 0 0 0  0 0 0 0 0  1.8 0 0 0 -0.72" />
        </filter>
        <linearGradient id="base" x1="0" x2="1">
          <stop offset="0" stopColor="#6c6c6c" />
          <stop offset="0.5" stopColor="#636363" />
          <stop offset="0.75" stopColor="#505050" />
          <stop offset="1" stopColor="#4c4c4c" />
        </linearGradient>
        <radialGradient id="knob"><stop offset="0" stopColor="#f2f2f2" /><stop offset="0.35" stopColor="#b0b0b0" /><stop offset="0.75" stopColor="#5c5c5c" /><stop offset="1" stopColor="#1d1d1d" /></radialGradient>
        <clipPath id="highland"><polygon points={flatPts[1]} /><polygon points={mountainPts} /><polygon points={flatPts[23]} /></clipPath>
        <clipPath id="frame"><rect width="880" height="880" /></clipPath>
      </defs>
      <g clipPath="url(#frame)">
        <rect width="880" height="880" fill="url(#base)" />
        {glows.map(([x, y, rx, ry, r, c, o], i) => (
          <ellipse key={i} cx={x} cy={y} rx={rx} ry={ry} fill={c} opacity={o} transform={`rotate(${r} ${x} ${y})`} filter={Math.min(rx, ry) < 40 ? "url(#soft14)" : "url(#soft30)"} />
        ))}
        <rect width="880" height="880" filter="url(#grain)" opacity="0.22" />
        <g filter="url(#soft9)" fill="none" stroke="#000" strokeLinejoin="round">
          <polyline points={eastSlope} strokeWidth="64" opacity="0.4" />
          <polyline points={eastSlope} strokeWidth="34" opacity="0.6" />
        </g>
        <g filter="url(#shade)" fill="#000" stroke="#000" strokeWidth="12" opacity="0.85">
          {flatPts.map((p, i) => <polygon key={i} points={p} />)}
          <polygon points={mountainPts} />
        </g>
        <g filter="url(#rough)">
          {flatPts.map((p, i) => <polygon key={i} points={p} fill="#373737" stroke="#070707" strokeWidth="1.800" />)}
          <polygon points={mountainPts} fill="#444444" stroke="#070707" strokeWidth="2" />
        </g>
        <ellipse cx="80" cy="499" rx="29" ry="34" fill="url(#knob)" stroke="#070707" />
        <g clipPath="url(#highland)">
          <g filter="url(#soft30)">
            <ellipse cx="375" cy="30" rx="90" ry="58" fill="#a8a8a8" opacity="0.75" />
            <ellipse cx="345" cy="95" rx="38" ry="46" fill="#999999" opacity="0.6" />
            <ellipse cx="645" cy="14" rx="86" ry="46" fill="#b8b8b8" opacity="0.9" />
            <ellipse cx="540" cy="190" rx="30" ry="50" fill="#555555" opacity="0.5" />
            <ellipse cx="590" cy="90" rx="90" ry="50" fill="#626262" opacity="0.7" />
            <ellipse cx="360" cy="284" rx="56" ry="40" fill="#6c6c6c" opacity="0.6" />
            <ellipse cx="630" cy="775" rx="100" ry="80" fill="#8a8a8a" opacity="0.8" />
            <ellipse cx="640" cy="860" rx="70" ry="60" fill="#a0a0a0" opacity="0.9" />
            <ellipse cx="730" cy="845" rx="60" ry="60" fill="#8a8a8a" opacity="0.75" />
          </g>
          <g filter="url(#soft9)" stroke="#ffffff" fill="none" strokeLinecap="round">
            {spines.map((s, i) => <polyline key={i} points={s.pts.map((p) => p.join(",")).join(" ")} strokeWidth="18" opacity={s.glow} />)}
          </g>
          <g filter="url(#ridge)" fill="#ffffff" stroke="#ffffff">
            {spurLines.map((l, i) => <path key={i} d={l.d} strokeWidth={l.w} opacity={l.o} />)}
          </g>
        </g>
        <g filter="url(#rough)" fill="none" stroke="#080808" strokeWidth="2">
          {pitPts.map((p, i) => <polygon key={i} points={p} fill="#0b0b0b" stroke="none" />)}
          <polygon points={flatPts[1]} strokeWidth="1.800" />
          <polygon points={mountainPts} />
          <polyline points={trace([["b", "680,268 688,310 675,340 680,375 690,395 715,405"]])} />
          <polyline points={trace([["a", "1235,452 1270,445 1290,432 1310,436 1340,440"]])} />
          <polyline points={trace([["b", "600,670 625,685 642,710 615,740"]])} strokeWidth="3" />
          <circle cx="703" cy="273" r="2" fill="#080808" stroke="none" />
        </g>
      </g>
      <path d="M0 .5h880M0 879.500h880" stroke="#9a9a9a" />
    </svg>
  );
}

/* ---------- status bar pieces ---------- */

const field = "h-[22px] rounded-xs border border-[#a3a3a3] bg-white";

function Spin({ label, value }: { label: string; value: string }) {
  return (
    <div className={`${field} flex w-[83px] overflow-hidden`}>
      <input aria-label={label} defaultValue={value} className="min-w-0 flex-1 px-1 outline-none" />
      <div className="flex w-3.5 flex-col items-center justify-center gap-[3px] border-l border-[#b5b5b5] bg-[#f4f4f4]">
        <button type="button" aria-label={`${label} up`} className="rotate-180"><Down /></button>
        <button type="button" aria-label={`${label} down`}><Down /></button>
      </div>
    </div>
  );
}

const menus: [string, number][] = [
  ["Project", 3], ["Edit", 0], ["View", 0], ["Layer", 0], ["Settings", 0], ["Plugins", 0], ["Vector", 4], ["Raster", 0], ["Database", 0], ["Web", 0], ["Mesh", 0], ["Processing", 3], ["Help", 0],
];

export default function App() {
  return (
    <div className="flex h-screen min-h-[700px] flex-col bg-[#efefef] font-['Noto_Sans',sans-serif] text-xs text-[#111]">
      <header className="flex h-[23px] shrink-0 items-center justify-between bg-[#eef3fa]">
        <div className="flex items-center gap-1.5 pl-0.5">
          <Svg s={16}>
            <circle cx="12" cy="12" r="9" stroke="#5c8f3c" strokeWidth="5" />
            <path d="M12 12l10 10" stroke="#7a9a3a" strokeWidth="5" />
            <path d="M9 9h6l-1 2 4 4-3 3-4-4-2 1z" fill="#f0a830" />
          </Svg>
          <h1 className="font-['Roboto',sans-serif] text-xs">*Untitled Project — QGIS [Empty]</h1>
        </div>
        <div className="flex items-center pr-2.5">
          {[["Minimize", "M1 5h9"], ["Restore", "M1.500 3.500h6v6h-6zM3.500 3.500v-2h6v6h-2"], ["Close", "M1 1l9 9M10 1l-9 9"]].map(([l, d]) => (
            <button key={l} type="button" aria-label={l} className="ml-3.5 flex w-8 items-center justify-center">
              <Svg s={11} vb={11}><path d={d} stroke="#222" /></Svg>
            </button>
          ))}
        </div>
      </header>
      <nav className="flex h-5 shrink-0 items-center gap-3.5 border-b border-[#d0d0d0] bg-[#efefef] pl-2.5">
        {menus.map(([m, u]) => (
          <button key={m} type="button" className="leading-4">
            {m.slice(0, u)}<span className="underline underline-offset-2">{m[u]}</span>{m.slice(u + 1)}
          </button>
        ))}
      </nav>
      <div className="shrink-0">
        <Toolbar items={row1} label="Project and navigation" />
        <Toolbar items={row2} label="Layers and editing" />
      </div>

      <main className="flex min-h-0 flex-1">
        <aside className="flex w-[300px] shrink-0 flex-col pr-1.5">
          <section className="flex flex-col">
            <DockTitle title="Browser" />
            <SmallTools label="Browser tools" items={[["addLayer", "Add Selected Layers"], ["refresh", "Refresh browser"], ["funnel", "Filter Browser"], ["collapse", "Collapse All"], ["info", "Properties"]]} />
            <ul className="h-[398px] border border-[#b2b2b2] bg-white pt-px">
              {browser.map(([ic, name, kids], i) => (
                <li key={i} className="flex h-[18px] items-center pl-1.5">
                  <span className="w-[13px]">
                    {kids && <svg width="5" height="8" viewBox="0 0 5 8" aria-hidden="true"><path d="M0 0l5 4-5 4z" fill="#555" /></svg>}
                  </span>
                  <Svg s={16}>{icons[ic]}</Svg>
                  <span className="pl-1.5">{name}</span>
                </li>
              ))}
            </ul>
          </section>
          <div className="flex h-1.5 items-center justify-center"><span className="w-4 border-t border-dotted border-[#999]" /></div>
          <section className="flex min-h-0 flex-1 flex-col">
            <DockTitle title="Layers" />
            <SmallTools label="Layer tools" items={[["brush", "Layer Styling"], ["group", "Add Group"], ["eye", "Map Themes"], ["funnelMenu", "Filter Legend"], ["eps", "Filter by Expression"], ["expand", "Expand All"], ["collapse", "Collapse All"], ["remove", "Remove Layer"]]} />
            <ul className="min-h-0 flex-1 overflow-hidden border border-[#b2b2b2] bg-white">
              <RasterLayer name="Water" max="195" min="0" active />
              <RasterLayer name="Terrain" max="1,674" min="671" />
              {vectors.map(([name, sym]) => (
                <li key={name} className="flex h-[18px] items-center pl-[23px]">
                  <Check label={name} />
                  <span className="mr-[6px] ml-1.5"><Svg s={16} vb={16}>{sym}</Svg></span>
                  <span className="text-[13px]">{name}</span>
                </li>
              ))}
            </ul>
          </section>
        </aside>
        <section aria-label="Map canvas" className="relative flex min-w-0 flex-1 justify-center border border-t-0 border-[#b2b2b2] bg-white pt-[25px] pb-[25px]">
          <TerrainMap />
          <svg width="8" height="4" viewBox="0 0 8 4" className="absolute top-[21px] left-1/2 ml-8" aria-hidden="true"><path d="M.5 4a3.500 3.500 0 017 0z" fill="#d9ab2f" stroke="#444" /></svg>
        </section>
      </main>

      <footer className="flex h-7 shrink-0 items-center pr-1.5 pl-1 font-['Liberation_Serif',serif] text-[11px] text-black">
        <label className={`${field} flex w-[200px] items-center gap-2 pl-2`}>
          <Svg s={13} vb={13}><circle cx="5.500" cy="5.500" r="4.500" stroke="#999" strokeWidth="1.300" /><path d="M9 9l3.500 3.500" stroke="#999" strokeWidth="1.800" /></Svg>
          <input aria-label="Type to locate" placeholder="Type to locate (Ctrl+K)" className="min-w-0 flex-1 text-[11px] outline-none placeholder:text-[#7d7d7d]" />
        </label>
        <span className="flex-1 pl-2">Ready</span>
        <label htmlFor="coord">Coordinate</label>
        <input id="coord" defaultValue="155972, -1313" className={`${field} ml-[3px] w-[75px] text-center`} />
        <button type="button" aria-label="Toggle extents" className="mr-3 ml-1">
          <Svg s={17}><path d="M3 3c8-4 18 8 17 17-6 4-16-2-14-9zM4 5l14 14M9 3l-4 12M14 5L9 18M22 3l-6 5" stroke="#444" strokeWidth="1.800" /><circle cx="16" cy="17" r="4" fill="#ddd" stroke="#333" /></Svg>
        </button>
        <label htmlFor="scale">Scale</label>
        <div className={`${field} relative ml-[3px] flex w-[81px]`}>
          <select id="scale" className="w-full appearance-none pl-1 outline-none"><option>1:61657</option></select>
          <span className="pointer-events-none absolute inset-y-0 right-0 flex w-5 items-center justify-center border-l border-[#b5b5b5] bg-[#f4f4f4]"><Down /></span>
        </div>
        <button type="button" aria-label="Lock scale" className="mr-1.5 ml-[9px]">
          <Svg s={14} vb={14}><path d="M4 7V4a3 3 0 016 0v3" stroke="#999" strokeWidth="1.500" /><rect x="1.500" y="6" width="11" height="8" rx="1" fill="#666" /></Svg>
        </button>
        <span className="mr-[3px]">Magnifier</span>
        <Spin label="Magnifier" value="100%" />
        <span className="mr-2 ml-2">Rotation</span>
        <Spin label="Rotation" value="0.0 °" />
        <span className="mr-[5px] ml-1.5"><Check label="Render" /></span>
        <span className="mr-3">Render</span>
        <button type="button" className="flex items-center gap-[3px]">
          <Svg s={15}><circle cx="12" cy="12" r="10" fill="#999" stroke="#666" strokeWidth="1.500" /><path d="M1 12h22M12 2v20M4 7h16M4 17h16M8 3c-3 6-3 12 0 18M16 3c3 6 3 12 0 18" stroke="#ddd" /></Svg>
          EPSG:32631
        </button>
        <button type="button" aria-label="Messages" className="ml-5">
          <Svg s={17}><path d="M12 2c6 0 11 4 11 9 0 3-1.500 5-3.500 6.500L20 23l-5-3.500C7 21 1 16 1 11s5-9 11-9z" fill="#555" /></Svg>
        </button>
      </footer>
    </div>
  );
}
